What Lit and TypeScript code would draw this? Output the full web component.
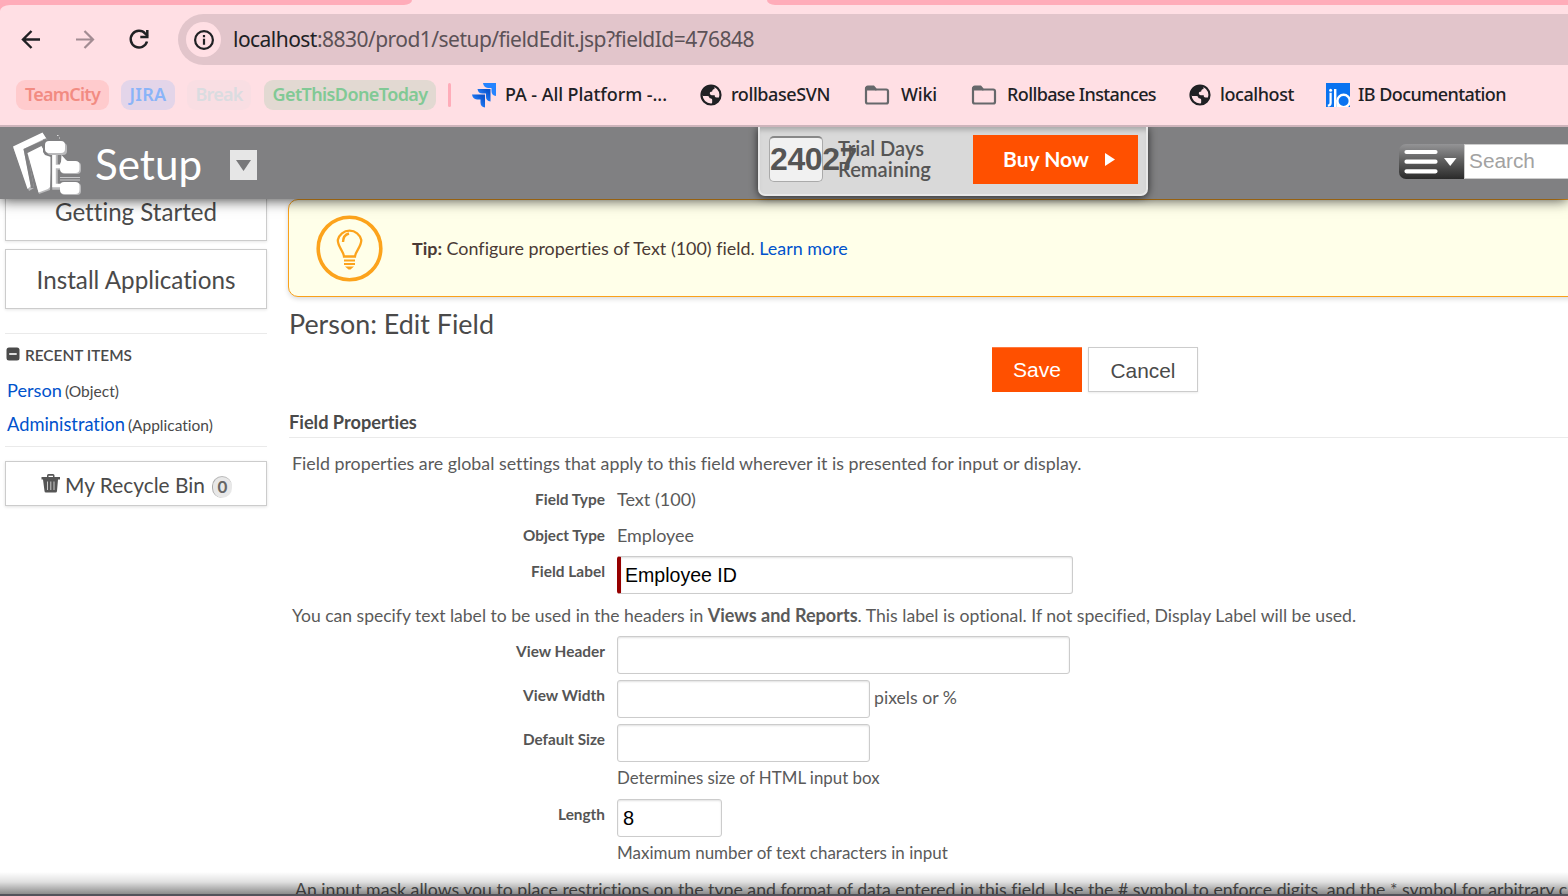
import { LitElement, html, css, svg } from "lit";
import { customElement, property } from "lit/decorators.js";

/** Inline run of text that is tuned to a given advance width. */
@customElement("fit-text")
class FitText extends LitElement {
  @property({ type: Number }) w = 0;
  @property() mode = "size";
  static styles = css`
    :host { display: inline-block; white-space: nowrap; }
  `;
  firstUpdated() {
    this.fit();
    document.fonts?.ready.then(() => this.fit());
  }
  fit() {
    this.style.fontSize = "";
    this.style.letterSpacing = "";
    const natural = this.getBoundingClientRect().width;
    if (!natural || !this.w) return;
    if (this.mode === "spacing") {
      const n = (this.textContent ?? "").length;
      this.style.letterSpacing = `${(this.w - natural) / n}px`;
    } else {
      const size = parseFloat(getComputedStyle(this).fontSize);
      this.style.fontSize = `${(size * this.w) / natural}px`;
    }
  }
  render() {
    return html`<slot></slot>`;
  }
}

const globe = svg`<svg class="ico" width="22" height="22" viewBox="0 0 22 22">
  <circle cx="11" cy="11" r="9.5" fill="#ffdfe4" stroke="#202124" stroke-width="2.2"/>
  <path d="M12 1.500C5.500 1 1.500 5.500 1.500 10.500L3 12H7.500C9 12 9.500 13 9.300 14L11 14.500C12.500 14.800 12.300 16 12 20.500C17 20 19.500 17.500 20.300 13.500H16.500C15 13.500 14.500 12.500 14.800 11.300C12 11.500 10 11.300 9.800 9.600C9.700 8 10.500 7.600 12.200 7.400C12.300 5.800 13 5.300 14.500 5V2.500Z" fill="#202124"/>
</svg>`;
const folder = svg`<svg class="ico" width="26" height="22" viewBox="0 0 26 22">
  <path d="M2 4.500A1.800 1.800 0 0 1 3.800 2.700H9.500L12 5.500H22.200A1.800 1.800 0 0 1 24 7.300V17.700A1.800 1.800 0 0 1 22.200 19.500H3.800A1.800 1.800 0 0 1 2 17.700Z" fill="none" stroke="#66686b" stroke-width="2.200"/>
  <path d="M1.500 6.500V3.500L3 2H9.500L12.500 6.500Z" fill="#66686b"/>
</svg>`;
const jira = svg`<svg class="ico" width="25" height="25" viewBox="0 0 25 25">
  <defs><linearGradient id="jg" x1="1" y1="0" x2="0" y2="1"><stop offset="0.200" stop-color="#0c56cf"/><stop offset="0.700" stop-color="#2684ff"/></linearGradient></defs>
  <path d="M11 0H24V13C21 12.500 19.500 11 19.500 8V5H16C13 4.800 11.500 3 11 0Z" fill="#2684ff"/>
  <path d="M5.500 6H18.500V18.500C15.500 18 14 16.500 14 14V10.500H10.500C7.500 10.500 6 9 5.500 6Z" fill="url(#jg)"/>
  <path d="M0 11.500H13V24.500C10 24 8.500 22.500 8.500 19.500V16.500H5C2 16.200 .5 14.500 0 11.500Z" fill="url(#jg)"/>
</svg>`;
const ibLogo = svg`<svg class="ico" width="24" height="24" viewBox="0 0 24 24">
  <rect width="24" height="24" fill="#0a73f0"/>
  <path d="M4.600 9.800V20Q4.600 22.600 1.800 22.600" fill="none" stroke="#fff" stroke-width="2.200"/>
  <circle cx="4.600" cy="7.200" r="1.500" fill="#fff"/>
  <rect x="8" y="6" width="2.400" height="18" fill="#fff"/>
  <circle cx="17.600" cy="18" r="6.200" fill="none" stroke="#fff" stroke-width="2.400"/>
  <path d="M10.400 24V17H11.600Q11.700 21.500 14.500 24Z" fill="#fff"/>
</svg>`;

@customElement("app-root")
class AppRoot extends LitElement {
  static styles = css`
    :host { display: block; width: 1568px; height: 896px; overflow: hidden; background: #fff; font-family: Lato, sans-serif; font-variant-ligatures: none; color: #4a4a4a; }
    * { box-sizing: border-box; }
    svg { display: block; flex: none; }
    .screen { position: relative; height: 896px; overflow: hidden; display: flex; flex-direction: column; }
    .tabs { height: 5px; background: #ffdfe4; display: flex; justify-content: space-between; flex: none; }
    .tabs .l { width: 412px; background: #ffacb9; border-bottom-right-radius: 8px 5px; }
    .tabs .r { width: 801px; background: #ffacb9; border-bottom-left-radius: 8px 5px; }
    .chrome { flex: none; height: 122px; background: #ffdfe4; border-bottom: 2px solid #ceb4bb; font-family: "Noto Sans", sans-serif; color: #202124; }
    .under { background: linear-gradient(90deg, #ffacb9 50%, #ffdfe4 50%); flex: none; position: relative; z-index: 4; }
    .under .chrome { border-top-left-radius: 10px 6px; }
    .nav { display: flex; height: 60px; padding-top: 9px; }
    .nav > svg { margin-top: 13px; }
    .back { margin-left: 19px; }
    .fwd { margin-left: 30px; }
    .reload { margin-left: 30px; }
    .addr { margin-left: 27px; flex: 1; height: 51px; border-radius: 26px 0 0 26px; background: #e2c5cb; display: flex; align-items: center; padding-left: 8px; font-size: 21px; line-height: 50px; }
    .addr fit-text { margin-top: -1px; }
    .info { width: 35px; height: 35px; border-radius: 50%; background: #ffdfe4; display: flex; align-items: center; justify-content: center; margin-right: 12px; }
    .addr .rest { color: #5c5257; }
    .marks { display: flex; align-items: center; height: 60px; padding-left: 16px; font-size: 18px; line-height: 30px; font-weight: 500; }
    .pill { height: 30px; border-radius: 9px; display: flex; justify-content: center; font-weight: 600; margin-right: 12px; line-height: 29px; }
    .tc { width: 93px; background: #ffcbcd; color: #f28b82; }
    .ji { width: 54px; background: #e3d5e9; color: #8ab4f8; }
    .br { width: 64px; background: #f9dee3; color: #dadce0; margin-right: 13px; }
    .gt { width: 172px; background: #e2d9d2; color: #81c995; }
    .sep { width: 3px; height: 24px; border-radius: 2px; background: #ffacb9; margin-right: 21px; }
    .mk { display: flex; align-items: center; }
    .mk fit-text { margin-top: -2px; }
    .m1 { width: 228px; gap: 8px; } .m2 { width: 164px; gap: 9px; } .m3 { width: 107px; gap: 11px; }
    .m4 { width: 218px; gap: 10px; } .m5 { width: 137px; gap: 9px; } .m6 { gap: 8px; }

    .head { flex: none; height: 72px; background: #808082; position: relative; z-index: 3; display: flex; box-shadow: 0 1px 13px rgba(0,0,0,.75); color: #fff; }
    .logo { margin: 4px 0 0 12px; }
    .title { width: 148px; flex: none; padding-left: 13px; line-height: 74px; font-size: 43px; }
    .drop { width: 27px; height: 30px; background: #e6e6e6; margin-top: 23px; display: flex; align-items: center; justify-content: center; }
    .trial { margin-left: 501px; width: 390px; height: 69px; background: #d9d9d9; border-radius: 0 0 7px 7px; border: 2px solid #e8e8e8; border-top: 0; box-shadow: 0 1px 8px rgba(0,0,0,.7), inset 0 6px 5px -3px #aaa; display: flex; padding-left: 9px; color: #555; }
    .days { width: 54px; height: 46px; margin-top: 9px; background: #f1f1f1; border: 1px solid #aaa; border-top: 2px solid #888; border-radius: 5px; font: bold 32px/43px "Liberation Sans", sans-serif; }
    .left { width: 150px; padding: 11px 0 0 15px; line-height: 21px; font-size: 20px; font-weight: 600; display: flex; flex-direction: column; align-items: flex-start; }
    .buy { width: 165px; height: 49px; margin-top: 8px; background: #ff5000; color: #fff; font-weight: 700; font-size: 21px; line-height: 47px; display: flex; align-items: center; padding-left: 30px; gap: 16px; }
    .buy fit-text { height: 49px; }
    .menu { margin: 17px 0 0 251px; width: 65px; height: 35px; border-radius: 7px 0 0 7px; background: linear-gradient(#949496, #5c5c5c 50%, #2a2a2a); }
    .search { margin-top: 17px; flex: 1; height: 35px; background: #fff; border: 1px solid #ccc; border-right: 0; color: #a2a2a2; padding-left: 4px; font: 20px/32px "Liberation Sans", sans-serif; }

    .page { flex: 1; min-height: 0; display: flex; align-items: flex-start; overflow: hidden; }
    .side { width: 267px; padding-left: 5px; flex: none; }
    .btn { height: 60px; margin: -18px 0 8px; border: 1px solid #ccc; box-shadow: 0 1px 3px rgba(0,0,0,.1); text-align: center; font-size: 24px; line-height: 60px; }
    .btn.second { margin-top: 0; line-height: 60px; margin-bottom: 24px; }
    .recent { border-top: 1px solid #eaeaea; border-bottom: 1px solid #eaeaea; height: 114px; padding: 4px 0 0 2px; }
    .rh { display: flex; align-items: center; height: 34px; font-weight: 600; font-size: 15px; gap: 5px; }
    .rh svg { margin: -2px 0 0 -1px; }
    .ri { display: flex; height: 34px; line-height: 37px; font-size: 18px; gap: 3px; align-items: baseline; }
    .a { color: #0052cc; }
    .sm { font-size: 15px; }
    .bin { margin-top: 14px; height: 45px; border: 1px solid #ccc; box-shadow: 0 1px 3px rgba(0,0,0,.12); display: flex; align-items: center; padding-left: 35px; line-height: 50px; font-size: 21px; }
    .bin svg { margin-top: -1px; }
    .bin fit-text { margin: 2px 0 0 5px; }
    .count { width: 20px; height: 22px; border-radius: 11px; background: #e8e8e8; border-left: 1px solid #aaa; border-top: 1px solid #bbb; text-align: center; line-height: 20px; font-size: 17px; font-weight: 700; color: #666; margin: 6px 0 0 7px; }

    .main { flex: 1; padding-left: 21px; min-width: 0; }
    .tip { height: 98px; width: 1300px; border: 1px solid #f9a11b; border-radius: 10px; background: #ffffe9; box-shadow: 0 2px 5px rgba(0,0,0,.15); display: flex; align-items: center; padding-left: 27px; line-height: 30px; font-size: 18px; color: #4a3a35; }
    .tip fit-text { margin-left: 29px; }
    .tip b, .strong { font-weight: 700; }
    h1 { margin: 8px 0 0 1px; font-weight: 400; font-size: 26px; line-height: 38px; height: 42px; }
    .acts { display: flex; gap: 6px; padding-left: 704px; font: 20px/43px "Liberation Sans", sans-serif; }
    .save { width: 90px; height: 45px; background: #ff5000; border-top: 1px solid #ff7a40; color: #fff; text-align: center; line-height: 44px; }
    .cancel { width: 110px; height: 45px; border: 1px solid #ccc; text-align: center; box-shadow: 0 1px 2px rgba(0,0,0,.08); line-height: 46px; }
    h2 { margin: 15px 0 0 1px; height: 31px; line-height: 31px; font-size: 18px; font-weight: 700; border-bottom: 1px solid #eaeaea; }
    .info-row { height: 36px; line-height: 34px; padding-left: 4px; font-size: 18px; color: #5a5a5a; }
    .info-row.first { height: 44px; line-height: 50px; }
    .row { display: grid; grid-template-columns: 317px auto; column-gap: 12px; height: 36px; line-height: 34px; font-size: 18px; }
    .row.in { height: 44px; }
    .row.in .ctl { line-height: 40px; }
    .lab { text-align: right; font-size: 15px; font-weight: 700; color: #555; }
    .ctl { display: flex; gap: 4px; color: #5a5a5a; }
    .box { height: 38px; margin-top: 2px; border: 1px solid #ccc; border-radius: 3px; box-shadow: inset 0 1px 2px rgba(0,0,0,.12); background: #fff; color: #000; padding-left: 5px; font: 20px/36px "Liberation Sans", sans-serif; }
    .b456 { width: 456px; border-left: 4px solid #960000; padding-left: 4px; } .b453 { width: 453px; } .b253 { width: 253px; } .b105 { width: 105px; }
    .help { height: 24px; line-height: 24px; padding-left: 329px; font-size: 17px; color: #5a5a5a; }
    .help.gap { height: 31px; }
    .mask { line-height: 49px; padding-left: 7px; white-space: nowrap; color: #5a5a5a; font-size: 17.700px; }
    .foot { position: absolute; left: 0; right: 0; bottom: 0; height: 24px; z-index: 4; background: linear-gradient(rgba(0,0,0,0), rgba(0,0,0,.12) 45%, rgba(0,0,0,.45)); border-bottom: 2px solid #53535b; }
  `;

  row(label: string, w: number, body: unknown, input = false) {
    return html`<div class="row ${input ? "in" : ""}">
      <div class="lab"><fit-text w=${w}>${label}</fit-text></div>
      <div class="ctl">${body}</div>
    </div>`;
  }

  render() {
    return html`<div class="screen">
      <div class="tabs"><div class="l"></div><div class="r"></div></div>
      <div class="under"><div class="chrome">
        <div class="nav">
          <svg class="back" width="24" height="24" viewBox="0 0 24 24" fill="none" stroke="#202124" stroke-width="2.400"><path d="M21 12.500H4.500M12.500 4L4 12.500L12.500 21"/></svg>
          <svg class="fwd" width="24" height="24" viewBox="0 0 24 24" fill="none" stroke="#a28c92" stroke-width="2.200"><path d="M3 12.500H19.500M11.500 4L20 12.500L11.500 21"/></svg>
          <svg class="reload" width="24" height="24" viewBox="0 0 24 24" fill="none" stroke="#202124" stroke-width="2.500"><path d="M20 14.500A8.300 8.300 0 1 1 18.300 6.700L20.500 9"/><path d="M20.300 3V10H13.300"/></svg>
          <div class="addr">
            <div class="info"><svg width="22" height="22" viewBox="0 0 22 22"><circle cx="11" cy="11" r="8.900" fill="none" stroke="#202124" stroke-width="2.200"/><path d="M11 9.800V15.800M11 6V8.200" stroke="#202124" stroke-width="2.200"/></svg></div>
            <fit-text w="521" mode="spacing">localhost<span class="rest">:8830/prod1/setup/fieldEdit.jsp?fieldId=476848</span></fit-text>
          </div>
        </div>
        <div class="marks">
          <div class="pill tc"><fit-text w="75" mode="spacing">TeamCity</fit-text></div>
          <div class="pill ji"><fit-text w="37" mode="spacing">JIRA</fit-text></div>
          <div class="pill br"><fit-text w="47" mode="spacing">Break</fit-text></div>
          <div class="pill gt"><fit-text w="155" mode="spacing">GetThisDoneToday</fit-text></div>
          <div class="sep"></div>
          <div class="mk m1">${jira}<fit-text w="162" mode="spacing">PA - All Platform -...</fit-text></div>
          <div class="mk m2">${globe}<fit-text w="99" mode="spacing">rollbaseSVN</fit-text></div>
          <div class="mk m3">${folder}<fit-text w="36" mode="spacing">Wiki</fit-text></div>
          <div class="mk m4">${folder}<fit-text w="149" mode="spacing">Rollbase Instances</fit-text></div>
          <div class="mk m5">${globe}<fit-text w="74" mode="spacing">localhost</fit-text></div>
          <div class="mk m6">${ibLogo}<fit-text w="148" mode="spacing">IB Documentation</fit-text></div>
        </div>
      </div></div>

      <div class="head">
        <svg class="logo" width="70" height="66" viewBox="0 0 70 66">
          <path d="M1.500 17L31 3L35.500 9L15 19L22 57L17 60Z" fill="#b9b9bb"/>
          <path d="M1 15.500L30.500 1.500L34 7L11.500 18L19 55L15.500 58Z" fill="#fff"/>
          <path d="M11.500 18L34 8L36 12L15.500 22L22 57L19 57Z" fill="#808082"/>
          <path d="M16.500 24L31 17L40 22L38 59L27 63Z" fill="#b9b9bb"/>
          <path d="M15.500 22L29.500 15L32 20L38 24V56L36 58L26.500 61.500Z" fill="#fff"/>
          <path d="M31 8.500H54V22L48 25V56H39V26L33 24L31 21Z" fill="#808082"/>
          <path d="M49.500 24L54 29L57 31H49Z" fill="#fff"/>
          <path d="M43 20V56H50M43 36H50" fill="none" stroke="#b9b9bb" stroke-width="5.500"/>
          <path d="M42 20V54.500H49M42 35.500H49" fill="none" stroke="#fff" stroke-width="3.600"/>
          <g fill="#b9b9bb"><rect x="35" y="12" width="20" height="12" rx="4"/><rect x="49" y="31" width="20" height="12" rx="4"/><rect x="49" y="52" width="20" height="12" rx="4"/></g>
          <g fill="#fff"><rect x="33" y="10" width="20" height="12" rx="4"/><rect x="48" y="30" width="19.500" height="12" rx="4"/><rect x="48" y="51" width="19.500" height="12" rx="4"/></g>
          <path d="M48 46.500H68M48 49H68" stroke="#c8c8ca" stroke-width="1" fill="none"/>
          <path d="M45 4.500h1.500M47 7h1" stroke="#ddd" stroke-width="1"/>
        </svg>
        <div class="title"><fit-text w="107">Setup</fit-text></div>
        <div class="drop"><svg width="15" height="11" viewBox="0 0 15 11"><path d="M0 0H15L7.500 11Z" fill="#78787a"/></svg></div>
        <div class="trial">
          <div class="days"><fit-text w="87" mode="spacing">24027</fit-text></div>
          <div class="left"><fit-text w="86">Trial Days</fit-text><fit-text w="93">Remaining</fit-text></div>
          <div class="buy"><fit-text w="86">Buy Now</fit-text><svg width="10" height="13" viewBox="0 0 10 13"><path d="M0 0L10 6.500L0 13Z" fill="#fff"/></svg></div>
        </div>
        <div class="menu"><svg width="65" height="35" viewBox="0 0 65 35"><path d="M7.500 8H36.500M7.500 17.700H36.500M7.500 27.300H36.500" stroke="#fff" stroke-width="4.200" stroke-linecap="round"/><path d="M45 14H57.500L51.200 22Z" fill="#fff"/></svg></div>
        <div class="search"><fit-text w="66">Search</fit-text></div>
      </div>

      <div class="page">
        <div class="side">
          <div class="btn"><fit-text w="162">Getting Started</fit-text></div>
          <div class="btn second"><fit-text w="199">Install Applications</fit-text></div>
          <div class="recent">
            <div class="rh"><svg width="14" height="14" viewBox="0 0 14 14"><rect x="0.500" y="0.500" width="13" height="13" rx="2.500" fill="#4a4a4a"/><rect x="3.200" y="6" width="7.500" height="2" fill="#ddd"/></svg><fit-text w="107">RECENT ITEMS</fit-text></div>
            <div class="ri"><fit-text class="a" w="55">Person</fit-text><fit-text class="sm" w="54">(Object)</fit-text></div>
            <div class="ri"><fit-text class="a" w="118">Administration</fit-text><fit-text class="sm" w="85">(Application)</fit-text></div>
          </div>
          <div class="bin">
            <svg width="19" height="19" viewBox="0 0 19 19"><path d="M0.500 3H6V1.500Q6 0 7.500 0H12Q13.500 0 13.500 1.500V3H19V5.500H0.500ZM7.500 3H12V1.700H7.500ZM2 5.500H17L16 17Q16 18.500 14.500 18.500H5Q3.500 18.500 3.500 17Z" fill="#555" fill-rule="evenodd"/><path d="M6.500 7.500V16M9.800 7.500V16M13 7.500V16" stroke="#ccc" stroke-width="1"/></svg>
            <fit-text w="140">My Recycle Bin</fit-text>
            <div class="count">0</div>
          </div>
        </div>

        <div class="main">
          <div class="tip">
            <svg width="67" height="67" viewBox="0 0 67 67" fill="none" stroke="#fca31c">
              <circle cx="33.500" cy="33.500" r="31.300" stroke-width="3.600"/>
              <path d="M28 41.500C27.500 36 21.800 32 21.800 25A12 11.700 0 0 1 45.300 25C45.300 32 39.500 36 39 41.500Z" stroke-width="2.300"/>
              <path d="M27 27C27 22.500 29.500 19.500 33 18.500" stroke-width="2.400"/>
              <path d="M28 45.500H39M28 49H39" stroke-width="2.200"/><path d="M29 51.500H38L34.500 54.500H32.500Z" fill="#fca31c" stroke="none"/>
            </svg>
            <fit-text w="436"><b>Tip:</b> Configure properties of Text (100) field. <span class="a">Learn more</span></fit-text>
          </div>
          <h1><fit-text w="205">Person: Edit Field</fit-text></h1>
          <div class="acts"><div class="save"><fit-text w="48">Save</fit-text></div><div class="cancel"><fit-text w="65">Cancel</fit-text></div></div>
          <h2><fit-text w="128">Field Properties</fit-text></h2>
          <div class="info-row first"><fit-text w="790">Field properties are global settings that apply to this field wherever it is presented for input or display.</fit-text></div>
          ${this.row("Field Type", 70, html`<fit-text w="79">Text (100)</fit-text>`)}
          ${this.row("Object Type", 82, html`<fit-text w="77">Employee</fit-text>`)}
          ${this.row("Field Label", 74, html`<div class="box b456"><fit-text w="112">Employee ID</fit-text></div>`, true)}
          <div class="info-row"><fit-text w="416">You can specify text label to be used in the headers in&nbsp;</fit-text><fit-text class="strong" w="150">Views and Reports</fit-text><fit-text w="499">. This label is optional. If not specified, Display Label will be used.</fit-text></div>
          ${this.row("View Header", 89, html`<div class="box b453"></div>`, true)}
          ${this.row("View Width", 82, html`<div class="box b253"></div><fit-text w="83">pixels or %</fit-text>`, true)}
          ${this.row("Default Size", 82, html`<div class="box b253"></div>`, true)}
          <div class="help gap"><fit-text w="263">Determines size of HTML input box</fit-text></div>
          ${this.row("Length", 47, html`<div class="box b105">8</div>`, true)}
          <div class="help"><fit-text w="331">Maximum number of text characters in input</fit-text></div>
          <div class="mask"><fit-text w="1273">An input mask allows you to place restrictions on the type and format of data entered in this field. Use the # symbol to enforce digits, and the * symbol for arbitrary c</fit-text></div>
        </div>
      </div>
      <div class="foot"></div>
    </div>`;
  }
}
